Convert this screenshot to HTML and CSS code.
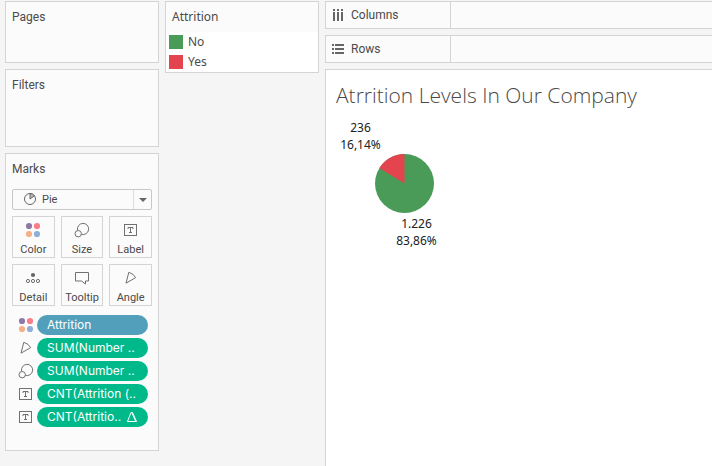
FILE: index.html
```html
<!DOCTYPE html>
<html lang="en">
<head>
<meta charset="utf-8">
<meta name="viewport" content="width=device-width, initial-scale=1">
<title>Attrition worksheet</title>
<link rel="stylesheet" href="styles.css">
</head>
<body>
<svg class="sprite" aria-hidden="true">
  <symbol id="i-color" viewBox="0 0 16 16">
    <circle cx="4" cy="4" r="3.1" fill="#8f7aa5"/><circle cx="12" cy="4" r="3.1" fill="#f97e8c"/>
    <circle cx="4" cy="12" r="3.1" fill="#f6b088"/><circle cx="12" cy="12" r="3.1" fill="#8fafd6"/>
  </symbol>
  <symbol id="i-size" viewBox="0 0 16 16">
    <path d="M3.6 8.200A5.600 5.600 0 1 1 7.300 12.300"/><circle cx="4.200" cy="11.700" r="3.200"/>
  </symbol>
  <symbol id="i-label" viewBox="0 0 16 16">
    <rect x="1.500" y="2.500" width="12" height="11"/><path d="M5 7V5.500h5V7M7.500 5.500v5M6 10.500h3"/>
  </symbol>
  <symbol id="i-detail" viewBox="0 0 16 16">
    <circle cx="8" cy="5" r="2.100" fill="#666" stroke="none"/>
    <circle cx="3" cy="11" r="1.600"/><circle cx="8" cy="11" r="1.600"/><circle cx="13" cy="11" r="1.600"/>
  </symbol>
  <symbol id="i-tooltip" viewBox="0 0 16 16">
    <path d="M1.500 2.500h13v8.500h-3v3l-4-3h-6z"/>
  </symbol>
  <symbol id="i-angle" viewBox="0 0 16 16">
    <path d="M5.800 2.300L3 13.200l9.700-5.600Q10.400 3.500 5.800 2.300z"/>
  </symbol>
</svg>
<div class="workspace">
  <aside class="shelves">
    <section class="card pages"><h2>Pages</h2></section>
    <section class="card filters"><h2>Filters</h2></section>
    <section class="card marks">
      <h2><label for="mark-type">Marks</label></h2>
      <div class="mark-type">
        <svg class="pie-icon" viewBox="0 0 14 14" aria-hidden="true"><circle cx="7" cy="7" r="5.500"/><path class="slice" d="M7 7V1.500A5.500 5.500 0 0 1 11.500 3.800z"/></svg>
        <select id="mark-type"><option>Pie</option><option>Bar</option><option>Line</option></select>
        <span class="arrow"></span>
      </div>
      <div class="tiles">
        <button type="button"><svg class="icon"><use href="#i-color"/></svg>Color</button>
        <button type="button"><svg class="icon"><use href="#i-size"/></svg>Size</button>
        <button type="button"><svg class="icon"><use href="#i-label"/></svg>Label</button>
        <button type="button"><svg class="icon"><use href="#i-detail"/></svg>Detail</button>
        <button type="button"><svg class="icon"><use href="#i-tooltip"/></svg>Tooltip</button>
        <button type="button"><svg class="icon"><use href="#i-angle"/></svg>Angle</button>
      </div>
      <ul class="fields">
        <li><svg class="icon"><use href="#i-color"/></svg><button type="button" class="pill dimension">Attrition</button></li>
        <li><svg class="icon"><use href="#i-angle"/></svg><button type="button" class="pill">SUM(Number ..</button></li>
        <li><svg class="icon"><use href="#i-size"/></svg><button type="button" class="pill">SUM(Number ..</button></li>
        <li><svg class="icon"><use href="#i-label"/></svg><button type="button" class="pill">CNT(Attrition (..</button></li>
        <li><svg class="icon"><use href="#i-label"/></svg><button type="button" class="pill">CNT(Attritio..<svg class="delta" viewBox="0 0 12 12" aria-hidden="true"><path d="M5 1.500h1.500L10.500 10.500H1.500z"/><path d="M6 2l3.800 8.500"/></svg></button></li>
      </ul>
    </section>
  </aside>
  <aside class="legend card">
    <h2>Attrition</h2>
    <ul>
      <li><span class="swatch no"></span>No</li>
      <li><span class="swatch yes"></span>Yes</li>
    </ul>
  </aside>
  <main class="view">
    <section class="shelf card">
      <h2><svg class="shelf-icon" viewBox="0 0 12 12" aria-hidden="true"><path d="M1 0h2v2H1zM5 0h2v2H5zM9 0h2v2H9zM1 3h2v9H1zM5 3h2v9H5zM9 3h2v9H9z"/></svg>Columns</h2>
    </section>
    <section class="shelf card">
      <h2><svg class="shelf-icon" viewBox="0 0 12 12" aria-hidden="true"><path d="M0 1h2v2H0zM0 5h2v2H0zM0 9h2v2H0zM3 1h9v2H3zM3 5h9v2H3zM3 9h9v2H3z"/></svg>Rows</h2>
    </section>
    <section class="sheet">
      <h1>Atrrition Levels In Our Company</h1>
      <svg class="chart" viewBox="0 0 130 140" role="img" aria-label="Attrition levels">
        <circle class="no" cx="78.500" cy="73.500" r="29.500"/>
        <path class="yes" d="M78.500 73.500V44A29.500 29.500 0 0 0 53.400 58z"/>
        <text x="34.500" y="22">236</text>
        <text x="34.500" y="39">16,14%</text>
        <text x="90.500" y="118">1.226</text>
        <text x="90.500" y="135">83,86%</text>
      </svg>
    </section>
  </main>
</div>
</body>
</html>
```

FILE: styles.css
```css
* { box-sizing: border-box; }
body {
  margin: 0;
  background: #f5f5f5;
  color: #4a4a4a;
  font: 12px/18px Roboto, "Liberation Sans", sans-serif;
}
h1, h2, ul { margin: 0; padding: 0; font-weight: 400; list-style: none; }
h2 { font-size: 12px; }
button, select { font: inherit; color: inherit; }
.sprite { position: absolute; width: 0; height: 0; }

.workspace {
  display: grid;
  grid-template-columns: 154px 154px 1fr;
  gap: 6px;
  align-items: start;
  min-height: 100vh;
  padding: 1px 0 0 5px;
}
.card { border: 1px solid #d4d4d4; background: #fbfbfb; }
.shelves, .view { display: flex; flex-direction: column; gap: 6px; }
.shelves .card { padding: 6px; }
.pages { min-height: 62px; }
.filters { min-height: 78px; }
.shelves .marks { padding-bottom: 23px; }

.icon {
  display: block;
  flex: none;
  width: 16px;
  height: 16px;
  fill: none;
  stroke: #707070;
}
#i-color { stroke: none; }

.mark-type { position: relative; margin-top: 11px; }
.mark-type select {
  display: block;
  width: 100%;
  height: 21px;
  padding: 0 20px 0 29px;
  border: 1px solid #c8c8c8;
  border-radius: 2px;
  background: #fbfbfb;
  font-size: 11px;
  appearance: none;
}
.pie-icon {
  position: absolute;
  left: 11px;
  top: 3px;
  width: 14px;
  height: 14px;
  fill: none;
  stroke: #666;
  pointer-events: none;
}
.pie-icon .slice { fill: #bbb; }
.arrow {
  position: absolute;
  top: 1px;
  right: 1px;
  bottom: 1px;
  display: grid;
  place-items: center;
  width: 18px;
  border-left: 1px solid #ddd;
  pointer-events: none;
}
.arrow::before {
  content: "";
  border: 4px solid transparent;
  border-top-color: #666;
  border-bottom: 0;
}

.tiles {
  display: grid;
  grid-template-columns: repeat(3, 1fr);
  gap: 6px;
  margin-top: 6px;
}
.tiles button {
  display: flex;
  flex-direction: column;
  align-items: center;
  gap: 5px;
  min-width: 0;
  height: 42px;
  padding: 5px 0 0;
  border: 1px solid #d4d4d4;
  background: #fbfbfb;
  font-size: 11px;
  line-height: 14px;
}

.fields { display: grid; gap: 3px; margin-top: 9px; padding: 0 4px 0 6px; }
.fields li { display: flex; align-items: center; gap: 3px; }
.pill {
  display: flex;
  align-items: center;
  justify-content: space-between;
  flex: 1;
  height: 20px;
  padding: 0 10px;
  border: 0;
  border-radius: 10px;
  background: #00b98b;
  color: #fff;
  font-family: Inter, Roboto, sans-serif;
  white-space: nowrap;
}
.dimension { background: #529fbc; }
.delta { width: 12px; height: 12px; fill: none; stroke: #fff; }

.legend h2 { padding: 6px; }
.legend h2, .legend ul { font-family: "Noto Sans", sans-serif; }
.legend ul { padding: 0 3px; background: #fff; }
.legend li { display: flex; align-items: center; gap: 5px; height: 20px; }
.swatch { width: 14px; height: 14px; }
.swatch.no { background: #4b9b58; }
.swatch.yes { background: #e4444e; }

.shelf { display: flex; height: 28px; border-right: 0; }
.shelf h2 {
  display: flex;
  align-items: center;
  gap: 7px;
  width: 125px;
  padding-left: 6px;
  border-right: 1px solid #d4d4d4;
}
.shelf-icon { width: 12px; height: 12px; fill: #666; }
.view { min-height: calc(100vh - 1px); }
.sheet {
  flex: 1;
  border: 1px solid #d4d4d4;
  border-width: 1px 0 0 1px;
  background: #fff;
}
h1 {
  padding: 10px 10px 0;
  font: 300 21px/30px "Open Sans", "Noto Sans", sans-serif;
}
.chart { display: block; width: 130px; height: 140px; }
.chart text {
  fill: #222;
  font: 12px "Noto Sans", sans-serif;
  text-anchor: middle;
}
.chart .no { fill: #4b9b58; }
.chart .yes { fill: #e4444e; }
```
